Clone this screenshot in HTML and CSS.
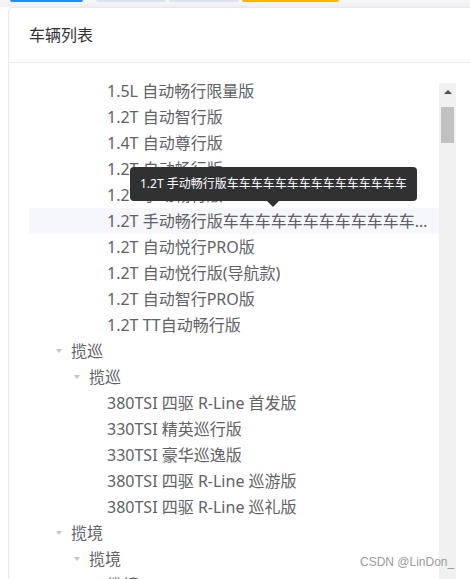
FILE: index.html
```html
<!DOCTYPE html>
<html lang="zh-CN">
<head>
<meta charset="utf-8">
<title>车辆列表</title>
<link rel="stylesheet" href="styles.css">
</head>
<body>
<div class="topbar">
  <span class="tab tab-blue"></span>
  <span class="tab tab-gray"></span>
  <span class="tab tab-gray tab-gap"></span>
  <span class="tab tab-yellow"></span>
</div>
<div class="card">
  <div class="card-header">车辆列表</div>
  <div class="card-body">
    <div class="scroll">
      <div class="tree">
        <div class="tree-inner">
          <div class="node lv4"><span class="spacer"></span><span class="label">1.5L 自动畅行限量版</span></div>
          <div class="node lv4"><span class="spacer"></span><span class="label">1.2T 自动智行版</span></div>
          <div class="node lv4"><span class="spacer"></span><span class="label">1.4T 自动尊行版</span></div>
          <div class="node lv4"><span class="spacer"></span><span class="label">1.2T 自动畅行版</span></div>
          <div class="node lv4"><span class="spacer"></span><span class="label">1.2T 手动畅行版</span></div>
          <div class="node lv4 hover"><span class="spacer"></span><span class="label">1.2T 手动畅行版车车车车车车车车车车车车车车车车车车车车</span></div>
          <div class="node lv4"><span class="spacer"></span><span class="label">1.2T 自动悦行PRO版</span></div>
          <div class="node lv4"><span class="spacer"></span><span class="label">1.2T 自动悦行版(导航款)</span></div>
          <div class="node lv4"><span class="spacer"></span><span class="label">1.2T 自动智行PRO版</span></div>
          <div class="node lv4"><span class="spacer"></span><span class="label">1.2T TT自动畅行版</span></div>
          <div class="node lv2"><span class="caret"></span><span class="label">揽巡</span></div>
          <div class="node lv3"><span class="caret"></span><span class="label">揽巡</span></div>
          <div class="node lv4"><span class="spacer"></span><span class="label">380TSI 四驱 R-Line 首发版</span></div>
          <div class="node lv4"><span class="spacer"></span><span class="label">330TSI 精英巡行版</span></div>
          <div class="node lv4"><span class="spacer"></span><span class="label">330TSI 豪华巡逸版</span></div>
          <div class="node lv4"><span class="spacer"></span><span class="label">380TSI 四驱 R-Line 巡游版</span></div>
          <div class="node lv4"><span class="spacer"></span><span class="label">380TSI 四驱 R-Line 巡礼版</span></div>
          <div class="node lv2"><span class="caret"></span><span class="label">揽境</span></div>
          <div class="node lv3"><span class="caret"></span><span class="label">揽境</span></div>
          <div class="node lv4"><span class="spacer"></span><span class="label">揽境</span></div>
        </div>
      </div>
      <div class="scrollbar">
        <div class="sb-up"><span class="sb-arrow"></span></div>
        <div class="sb-thumb"></div>
      </div>
    </div>
  </div>
</div>
<div class="tooltip">1.2T 手动畅行版车车车车车车车车车车车车车车车<span class="tooltip-arrow"></span></div>
<div class="watermark">CSDN @LinDon_</div>
</body>
</html>
```
FILE: styles.css
```css
html, body {
  margin: 0;
  padding: 0;
  overflow: hidden;
  background: #fff;
  font-family: "Noto Sans", "Noto Sans CJK SC", sans-serif;
}

body {
  position: relative;
  height: 579px;
}

.topbar {
  height: 7px;
  background: linear-gradient(#f7f7f9, #f0f0f4);
  display: flex;
  align-items: flex-start;
  padding-left: 10px;
}

.tab {
  height: 2px;
  border-radius: 0 0 2px 2px;
}

.tab-blue {
  width: 73px;
  background: #1890ff;
  margin-right: 13px;
}

.tab-gray {
  width: 70px;
  background: #dde3ee;
}

.tab-gap {
  margin-left: 3px;
  margin-right: 3px;
}

.tab-yellow {
  width: 97px;
  background: #ffb400;
}

.card {
  margin-left: 8px;
  width: 469px;
  box-sizing: border-box;
  border: 1px solid #e6e9f0;
  border-radius: 4px 0 0 0;
  background: #fff;
  height: 600px;
}

.card-header {
  padding: 17px 20px;
  line-height: 20px;
  font-size: 16px;
  color: #303133;
  border-bottom: 1px solid #e6e9f0;
}

.card-body {
  padding: 20px 20px 0 20px;
}

.scroll {
  display: flex;
  height: 520px;
  overflow: hidden;
}

.tree {
  flex: 1;
  min-width: 0;
  overflow: hidden;
}

.tree-inner {
  margin-top: -5px;
}

.node {
  height: 26px;
  display: flex;
  align-items: center;
  font-size: 16px;
  line-height: 24px;
  color: #606266;
  white-space: nowrap;
}

.node.hover {
  background: #f5f7fa;
}

.lv2 { padding-left: 18px; }
.lv3 { padding-left: 36px; }
.lv4 { padding-left: 54px; }

.spacer {
  flex: none;
  width: 24px;
}

.caret {
  flex: none;
  width: 24px;
  height: 12px;
  display: flex;
  align-items: center;
  justify-content: center;
}

.caret::before {
  content: "";
  width: 0;
  height: 0;
  border-left: 3.5px solid transparent;
  border-right: 3.5px solid transparent;
  border-top: 4px solid #c0c4cc;
}

.label {
  flex: 1;
  min-width: 0;
  overflow: hidden;
  text-overflow: ellipsis;
  padding-right: 4px;
}

.scrollbar {
  flex: none;
  width: 17px;
  background: #f1f1f1;
  display: flex;
  flex-direction: column;
  align-items: center;
}

.sb-up {
  height: 17px;
  width: 17px;
  display: flex;
  align-items: center;
  justify-content: center;
}

.sb-arrow {
  width: 0;
  height: 0;
  border-left: 4px solid transparent;
  border-right: 4px solid transparent;
  border-bottom: 4px solid #505050;
}

.sb-thumb {
  margin-top: 7px;
  width: 13px;
  height: 36px;
  background: #c1c1c1;
}

.tooltip {
  position: absolute;
  left: 130px;
  top: 167px;
  padding: 10px 10px;
  background: #303133;
  color: #fff;
  font-size: 12px;
  line-height: 14px;
  border-radius: 4px;
  white-space: nowrap;
}

.tooltip-arrow {
  position: absolute;
  left: 50%;
  bottom: -6px;
  margin-left: -6px;
  width: 0;
  height: 0;
  border-left: 6px solid transparent;
  border-right: 6px solid transparent;
  border-top: 6px solid #303133;
}

.watermark {
  position: absolute;
  left: 360px;
  top: 555px;
  font-family: "Liberation Sans", Arial, sans-serif;
  font-size: 12px;
  color: #9a9a9a;
  white-space: nowrap;
}
```
